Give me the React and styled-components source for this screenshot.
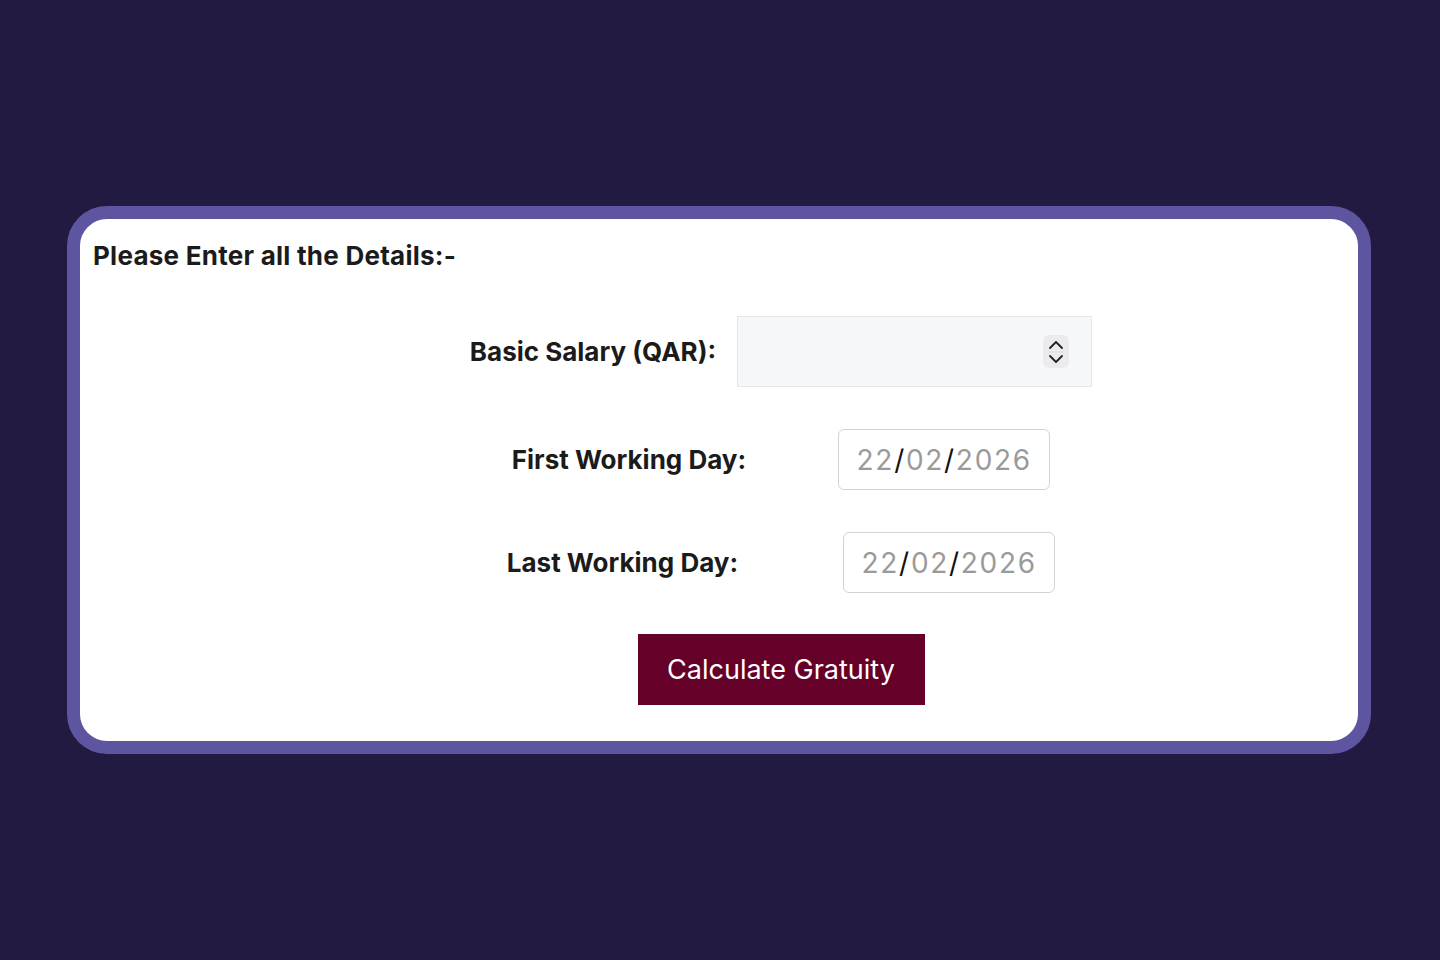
import React, { useState } from 'react';
import styled, { createGlobalStyle } from 'styled-components';

const GlobalStyle = createGlobalStyle`
  html, body {
    margin: 0;
    padding: 0;
    background: #231a42;
    font-family: 'Inter', 'Liberation Sans', sans-serif;
  }
`;

const Page = styled.div`
  min-height: 100vh;
  display: flex;
  align-items: center;
  justify-content: center;
  padding: 0 2px 0 0;
  box-sizing: border-box;
`;

const Card = styled.div`
  width: 1304px;
  box-sizing: border-box;
  background: #ffffff;
  border: 13px solid #5e55a1;
  border-radius: 40px;
  padding: 21px 13px 36px;
`;

const Heading = styled.h2`
  margin: 0 0 45px;
  font-size: 26px;
  line-height: 31px;
  font-weight: 700;
  letter-spacing: 0.25px;
  color: #1b1b1b;
`;

const Form = styled.form`
  display: flex;
  flex-direction: column;
  align-items: center;
  gap: 42px;
  padding-left: 124px;
`;

const Row = styled.div`
  display: flex;
  align-items: center;
  gap: ${(p) => p.$gap}px;
`;

const Label = styled.label`
  font-size: 26px;
  font-weight: 700;
  color: #1b1b1b;
`;

const NumberBox = styled.div`
  width: 355px;
  height: 71px;
  box-sizing: border-box;
  background: #f6f7f9;
  border: 1px solid #e6e6e6;
  display: flex;
  align-items: center;
  padding: 0 22px 0 16px;
`;

const NumberInput = styled.input`
  flex: 1;
  min-width: 0;
  border: none;
  outline: none;
  background: transparent;
  font-family: inherit;
  font-size: 22px;
  color: #1b1b1b;
`;

const Spinner = styled.div`
  width: 26px;
  height: 33px;
  border-radius: 6px;
  background: #ebebed;
  display: flex;
  flex-direction: column;
  align-items: center;
  justify-content: center;
`;

const DateBox = styled.div`
  width: 212px;
  height: 61px;
  box-sizing: border-box;
  border: 1px solid #d3d3d3;
  border-radius: 6px;
  background: #fff;
  display: flex;
  align-items: center;
  justify-content: center;
  font-size: 28px;
  letter-spacing: 1.7px;
  color: #9a9a9a;
`;

const Slash = styled.span`
  color: #111;
`;

const Button = styled.button`
  width: 287px;
  height: 71px;
  margin-top: -1px;
  border: none;
  background: #650028;
  color: #fff;
  font-family: inherit;
  font-size: 27px;
  font-weight: 400;
  cursor: pointer;
`;

const DateField = ({ value }) => {
  const [d, m, y] = value.split('/');
  return (
    <DateBox>
      {d}<Slash>/</Slash>{m}<Slash>/</Slash>{y}
    </DateBox>
  );
};

const App = () => {
  const [salary, setSalary] = useState('');

  return (
    <>
      <GlobalStyle />
      <Page>
        <Card>
          <Heading>Please Enter all the Details:-</Heading>
          <Form onSubmit={(e) => e.preventDefault()}>
            <Row $gap={21}>
              <Label>Basic Salary (QAR):</Label>
              <NumberBox>
                <NumberInput
                  type="text"
                  inputMode="numeric"
                  value={salary}
                  onChange={(e) => setSalary(e.target.value)}
                />
                <Spinner>
                  <svg width="18" height="30" viewBox="0 0 18 30" fill="none" stroke="#222" strokeWidth="1.8" strokeLinecap="round" strokeLinejoin="round">
                    <path d="M3 11 L9 5 L15 11" />
                    <line x1="1" y1="15" x2="17" y2="15" stroke="#dcdcdc" strokeWidth="1" />
                    <path d="M3 19 L9 25 L15 19" />
                  </svg>
                </Spinner>
              </NumberBox>
            </Row>
            <Row $gap={92}>
              <Label>First Working Day:</Label>
              <DateField value="22/02/2026" />
            </Row>
            <Row $gap={105}>
              <Label>Last Working Day:</Label>
              <DateField value="22/02/2026" />
            </Row>
            <Button type="submit">Calculate Gratuity</Button>
          </Form>
        </Card>
      </Page>
    </>
  );
};

export default App;
